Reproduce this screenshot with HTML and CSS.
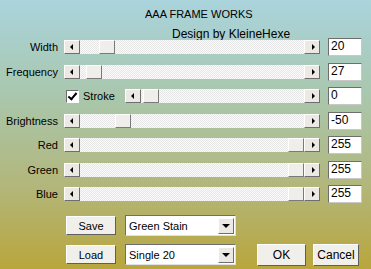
FILE: index.html
```html
<!DOCTYPE html>
<html lang="en">
<head>
    <meta charset="UTF-8">
    <title>AAA Frame Works</title>
    <link rel="stylesheet" href="styles.css">
</head>
<body>
    <div class="dialog">
        <div class="title">AAA FRAME WORKS</div>
        <div class="subtitle">Design by KleineHexe</div>

        <div class="sliders">
            <div class="row">
                <span class="name">Width</span>
                <div class="scroll">
                    <span class="arrow left"></span>
                    <div class="track"><span class="thumb" style="margin-left: 19px"></span></div>
                    <span class="arrow right"></span>
                </div>
                <div class="value">20</div>
            </div>
            <div class="row">
                <span class="name">Frequency</span>
                <div class="scroll">
                    <span class="arrow left"></span>
                    <div class="track"><span class="thumb" style="margin-left: 6px"></span></div>
                    <span class="arrow right"></span>
                </div>
                <div class="value">27</div>
            </div>
            <div class="row">
                <span class="name"></span>
                <div class="stroke">
                    <span class="check"></span>
                    <span class="check-label">Stroke</span>
                    <div class="scroll">
                        <span class="arrow left"></span>
                        <div class="track"><span class="thumb" style="margin-left: 2px"></span></div>
                        <span class="arrow right"></span>
                    </div>
                </div>
                <div class="value">0</div>
            </div>
            <div class="row">
                <span class="name">Brightness</span>
                <div class="scroll">
                    <span class="arrow left"></span>
                    <div class="track"><span class="thumb" style="margin-left: 35px"></span></div>
                    <span class="arrow right"></span>
                </div>
                <div class="value">-50</div>
            </div>
            <div class="row">
                <span class="name">Red</span>
                <div class="scroll">
                    <span class="arrow left"></span>
                    <div class="track"><span class="thumb end"></span></div>
                    <span class="arrow right"></span>
                </div>
                <div class="value">255</div>
            </div>
            <div class="row">
                <span class="name">Green</span>
                <div class="scroll">
                    <span class="arrow left"></span>
                    <div class="track"><span class="thumb end"></span></div>
                    <span class="arrow right"></span>
                </div>
                <div class="value">255</div>
            </div>
            <div class="row">
                <span class="name">Blue</span>
                <div class="scroll">
                    <span class="arrow left"></span>
                    <div class="track"><span class="thumb end"></span></div>
                    <span class="arrow right"></span>
                </div>
                <div class="value">255</div>
            </div>
        </div>

        <div class="presets">
            <div class="preset-row">
                <button class="btn">Save</button>
                <div class="combo"><span class="combo-text">Green Stain</span><span class="combo-btn"></span></div>
            </div>
            <div class="preset-row">
                <button class="btn">Load</button>
                <div class="combo"><span class="combo-text">Single 20</span><span class="combo-btn"></span></div>
                <div class="actions">
                    <button class="btn big ok">OK</button>
                    <button class="btn big cancel">Cancel</button>
                </div>
            </div>
        </div>
    </div>
</body>
</html>
```

FILE: styles.css
```css
body {
    margin: 0;
    font-family: "Liberation Sans", Arial, sans-serif;
    color: #000;
}

.dialog {
    width: 371px;
    height: 269px;
    box-sizing: border-box;
    padding-top: 8px;
    background: linear-gradient(#aad4dd 0%, #a9c7ae 35%, #b2b679 70%, #b9a63c 100%);
    overflow: hidden;
}

.title {
    font-size: 11px;
    line-height: 13px;
    padding-left: 145px;
}

.subtitle {
    font-size: 12px;
    line-height: 14px;
    height: 11px;
    margin-top: 6px;
    padding-left: 172px;
}

/* Slider rows */
.sliders {
    display: flex;
    flex-direction: column;
    gap: 6.5px;
}

.row {
    display: grid;
    grid-template-columns: 58px 256px 36px;
    column-gap: 6px;
    align-items: center;
    height: 18px;
}

.row .value {
    margin-left: 2px;
}

.name {
    font-size: 11px;
    text-align: right;
}

.scroll {
    display: flex;
    height: 14px;
}

.arrow {
    width: 16px;
    height: 14px;
    box-sizing: border-box;
    background: #ece9e4;
    border: 1px solid;
    border-color: #fff #6e6e6e #6e6e6e #fff;
    position: relative;
}

.arrow::after {
    content: "";
    position: absolute;
    top: 3px;
    border-top: 3px solid transparent;
    border-bottom: 3px solid transparent;
}

.arrow.left::after {
    left: 5px;
    border-right: 3px solid #000;
}

.arrow.right::after {
    left: 7px;
    border-left: 3px solid #000;
}

.track {
    flex: 1;
    display: flex;
    background: repeating-conic-gradient(#fbfbfb 0 25%, #e6e6e6 0 50%) 0 0 / 2px 2px;
}

.thumb {
    width: 16px;
    height: 14px;
    box-sizing: border-box;
    background: #efeeeb;
    border: 1px solid;
    border-color: #fff #7a7a7a #7a7a7a #fff;
}

.thumb.end {
    margin-left: auto;
}

.stroke {
    display: flex;
    align-items: center;
}

.check {
    width: 13px;
    height: 13px;
    box-sizing: border-box;
    margin-left: 2px;
    background: #fff;
    border: 1px solid;
    border-color: #6e6e6e #fff #fff #6e6e6e;
    position: relative;
}

.check::after {
    content: "";
    position: absolute;
    left: 3px;
    top: 0px;
    width: 3px;
    height: 7px;
    border: solid #000;
    border-width: 0 2px 2px 0;
    transform: rotate(40deg);
}

.check-label {
    font-size: 11px;
    margin-left: 4px;
    width: 42px;
}

.stroke .scroll {
    flex: 1;
}

.value {
    height: 18px;
    box-sizing: border-box;
    background: #fff;
    border: 1px solid;
    border-color: #6e6e6e #c8c8c8 #c8c8c8 #6e6e6e;
    font-size: 12px;
    line-height: 14px;
    padding-left: 2px;
}

/* Presets and buttons */
.presets {
    margin-top: 12px;
    padding-left: 66px;
    display: flex;
    flex-direction: column;
    gap: 8px;
}

.preset-row {
    display: flex;
    align-items: center;
    height: 21px;
}

.btn {
    font-family: inherit;
    font-size: 11px;
    width: 50px;
    height: 19px;
    padding: 0;
    background: #f1efea;
    border: 1px solid;
    border-color: #fff #5e5e5e #5e5e5e #fff;
    color: #000;
}

.combo {
    display: flex;
    align-items: center;
    width: 111px;
    height: 21px;
    box-sizing: border-box;
    margin-left: 9px;
    background: #fff;
    border: 1px solid;
    border-color: #6e6e6e #e0e0e0 #e0e0e0 #6e6e6e;
    padding: 0 1px 0 3px;
}

.combo-text {
    flex: 1;
    font-size: 11px;
}

.combo-btn {
    width: 16px;
    height: 16px;
    box-sizing: border-box;
    background: #ece9e4;
    border: 1px solid;
    border-color: #fff #6e6e6e #6e6e6e #fff;
    position: relative;
}

.combo-btn::after {
    content: "";
    position: absolute;
    left: 3px;
    top: 5px;
    border-left: 4px solid transparent;
    border-right: 4px solid transparent;
    border-top: 4px solid #000;
}

.actions {
    display: flex;
    gap: 7px;
    margin-left: 21px;
}

.btn.big {
    height: 22px;
    font-size: 12px;
}

.btn.ok {
    width: 49px;
}

.btn.cancel {
    width: 46px;
}
```
